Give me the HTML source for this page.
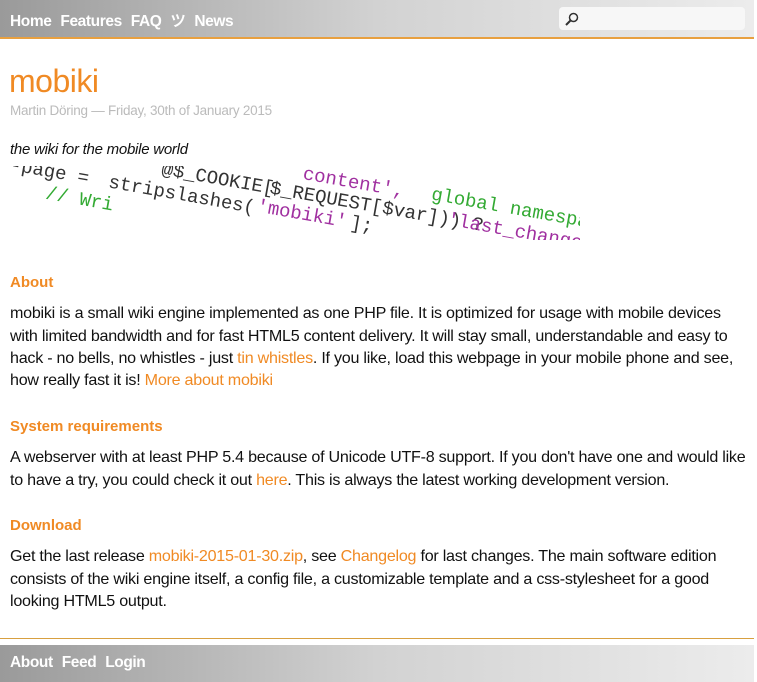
<!DOCTYPE html>
<html><head><meta charset="utf-8"><style>
*{margin:0;padding:0;box-sizing:border-box}
body{width:757px;height:682px;background:#fff;font-family:"Liberation Sans",sans-serif;color:#111;position:relative;overflow:hidden}
.hdr{position:absolute;left:0;top:0;width:754px;height:39px;background:linear-gradient(90deg,#9a9a9a,#d2d2d2 50%,#ececec);border-bottom:2px solid #e8a040}
.nav{position:absolute;left:10px;top:9px;color:#fff;font-weight:bold;font-size:15.5px;letter-spacing:-0.4px;white-space:nowrap}
.nav span{margin-right:5px}
.search{position:absolute;left:559px;top:7px;width:186px;height:23px;background:#f7f7f7;border-radius:4px}
.ftr{position:absolute;left:0;top:645px;width:754px;height:37px;background:linear-gradient(90deg,#9a9a9a,#d2d2d2 50%,#ececec)}
.fline{position:absolute;left:0;top:638px;width:754px;height:1px;background:#d8a040}
.l{position:absolute;left:10px;white-space:nowrap;font-size:16.1px;letter-spacing:-0.25px}
.o{color:#f08a24}
h1{position:absolute;left:9px;top:63px;font-size:32px;color:#f08a24;font-weight:normal;letter-spacing:-0.5px}
.h{position:absolute;left:10px;font-size:15px;font-weight:bold;color:#f08a24}
</style></head><body>
<div class="hdr"><div class="nav"><span>Home</span> <span>Features</span> <span>FAQ</span> <span>ツ</span> <span>News</span></div>
<div class="search"><svg width="16" height="16" viewBox="0 0 16 16" style="position:absolute;left:5px;top:4px"><circle cx="9.5" cy="6.5" r="4" fill="none" stroke="#333" stroke-width="1.5"/><line x1="6.5" y1="9.5" x2="2" y2="14" stroke="#333" stroke-width="2"/></svg></div></div>
<h1>mobiki</h1>
<div class="l" style="top:103px;color:#bbb;font-size:13.5px">Martin Döring — Friday, 30th of January 2015</div>
<div class="l" style="top:141px;font-style:italic;font-size:15px">the wiki for the mobile world</div>
<svg style="position:absolute;left:10px;top:166px;overflow:hidden" width="570" height="74"><g font-family="Liberation Mono,monospace" font-size="19" transform="rotate(10)">
<text x="290" y="-38" fill="#a030a0">content',</text><text x="420" y="-40" fill="#3a3">global namespace</text>
<text x="150" y="-18" fill="#333">@$_COOKIE[</text><text x="260" y="-18" fill="#333">$_REQUEST[$var])) ?</text><text x="440" y="-18" fill="#a030a0">'last_change'</text>
<text x="0" y="4" fill="#333">-page =</text><text x="100" y="4" fill="#333">stripslashes(</text><text x="250" y="2" fill="#a030a0">'mobiki'</text><text x="345" y="2" fill="#333">];</text>
<text x="40" y="26" fill="#3a3">// Wri</text></g></svg>
<div class="h" style="top:274px">About</div>
<div class="l" style="top:304px">mobiki is a small wiki engine implemented as one PHP file. It is optimized for usage with mobile devices</div>
<div class="l" style="top:327px">with limited bandwidth and for fast HTML5 content delivery. It will stay small, understandable and easy to</div>
<div class="l" style="top:349px">hack - no bells, no whistles - just <span class="o">tin whistles</span>. If you like, load this webpage in your mobile phone and see,</div>
<div class="l" style="top:371px">how really fast it is! <span class="o">More about mobiki</span></div>
<div class="h" style="top:418px">System requirements</div>
<div class="l" style="top:448px">A webserver with at least PHP 5.4 because of Unicode UTF-8 support. If you don't have one and would like</div>
<div class="l" style="top:471px">to have a try, you could check it out <span class="o">here</span>. This is always the latest working development version.</div>
<div class="h" style="top:517px">Download</div>
<div class="l" style="top:547px">Get the last release <span class="o">mobiki-2015-01-30.zip</span>, see <span class="o">Changelog</span> for last changes. The main software edition</div>
<div class="l" style="top:570px">consists of the wiki engine itself, a config file, a customizable template and a css-stylesheet for a good</div>
<div class="l" style="top:592px">looking HTML5 output.</div>
<div class="fline"></div>
<div class="ftr"><div class="nav" style="top:9px"><span>About</span> <span>Feed</span> <span>Login</span></div></div>
</body></html>
